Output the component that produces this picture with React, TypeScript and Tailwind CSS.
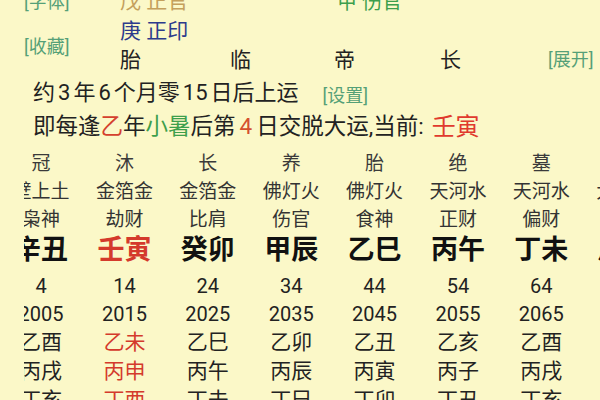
import React from 'react'

const COLS = [
  { cs: '冠', ny: '壁上土', ss: '枭神', gz: '辛丑', age: 4, year: 2005, ln: ['乙酉', '丙戌', '丁亥'] },
  { cs: '沐', ny: '金箔金', ss: '劫财', gz: '壬寅', age: 14, year: 2015, ln: ['乙未', '丙申', '丁酉'], cur: true },
  { cs: '长', ny: '金箔金', ss: '比肩', gz: '癸卯', age: 24, year: 2025, ln: ['乙巳', '丙午', '丁未'] },
  { cs: '养', ny: '佛灯火', ss: '伤官', gz: '甲辰', age: 34, year: 2035, ln: ['乙卯', '丙辰', '丁巳'] },
  { cs: '胎', ny: '佛灯火', ss: '食神', gz: '乙巳', age: 44, year: 2045, ln: ['乙丑', '丙寅', '丁卯'] },
  { cs: '绝', ny: '天河水', ss: '正财', gz: '丙午', age: 54, year: 2055, ln: ['乙亥', '丙子', '丁丑'] },
  { cs: '墓', ny: '天河水', ss: '偏财', gz: '丁未', age: 64, year: 2065, ln: ['乙酉', '丙戌', '丁亥'] },
  { cs: '死', ny: '大驿土', ss: '正官', gz: '戊申', age: 74, year: 2075, ln: ['乙未', '丙申', '丁酉'] },
]

function Link({ children }: { children: React.ReactNode }) {
  return <span className="text-[18px] text-[#55a077]">[{children}]</span>
}

function DayunCol({ c }: { c: (typeof COLS)[number] }) {
  const red = c.cur ? 'text-[#d43a2c]' : ''
  return (
    <div className="w-[83.4px] shrink-0 flex flex-col items-center whitespace-nowrap text-[#222]">
      <div className="h-[28px] leading-[28px] text-[19px] text-[#3a3a3a]">{c.cs}</div>
      <div className="h-[28px] leading-[28px] text-[19px] text-[#333]">{c.ny}</div>
      <div className="h-[28px] leading-[28px] text-[19px] text-[#333]">{c.ss}</div>
      <div className={`h-[32px] leading-[32px] text-[27px] ${c.cur ? 'font-semibold text-[#d43a2c]' : 'font-bold text-[#111]'}`}>{c.gz}</div>
      <div className="mt-[6px] h-[28px] leading-[28px] text-[20px]">{c.age}</div>
      <div className="h-[28px] leading-[28px] text-[20px]">{c.year}</div>
      {c.ln.map((s) => (
        <div key={s} className={`h-[29px] leading-[29px] text-[21px] ${red}`}>{s}</div>
      ))}
    </div>
  )
}

export default function App() {
  return (
    <div className="w-[600px] h-[400px] overflow-hidden bg-[#fbf8c8] font-['Roboto','Noto_Sans_CJK_SC',sans-serif] text-[#222]">
      {/* 四柱顶部 */}
      <div className="-mt-[13px] grid grid-cols-[120px_107px_107px_107px_107px_1fr] grid-rows-[29.5px_29.5px_29.5px] items-center whitespace-nowrap">
        <div className="pl-[24px]"><Link>字体</Link></div>
        <div className="text-[21px] text-[#c4a05c]">戊 正官</div>
        <div />
        <div className="pl-[3px] text-[20px] text-[#3d9f4c]">甲 伤官</div>
        <div />
        <div />

        <div className="row-span-2 pl-[24px] pt-[1px]"><Link>收藏</Link></div>
        <div className="text-[21px] text-[#2c3a8c]">庚 正印</div>
        <div />
        <div />
        <div />
        <div />

        <div className="text-[21px]">胎</div>
        <div className="pl-[3px] text-[21px]">临</div>
        <div className="text-[21px]">帝</div>
        <div className="-ml-[1px] text-[21px]">长</div>
        <div className="justify-self-end pr-[10px] -mt-[3px]"><Link>展开</Link></div>
      </div>

      {/* 起运 */}
      <div className="pl-[33px] h-[34px] flex items-center whitespace-nowrap text-[22px]">
        约<span className="mx-[3px]">3</span>年<span className="mx-[3px]">6</span>个月零<span className="mx-[3px]">15</span>日后上运
        <span className="ml-[24px] mt-[3px]"><Link>设置</Link></span>
      </div>
      <div className="pl-[33px] h-[34px] flex items-center whitespace-nowrap text-[22.5px]">
        即每逢<span className="text-[#d4402e]">乙</span>年<span className="text-[#3d9f4c]">小暑</span>后第
        <span className="mx-[4px] text-[#d4502e]">4</span>日交脱大运,当前:
        <span className="ml-[8px] text-[24px] text-[#e03a2e]">壬寅</span>
      </div>

      {/* 大运 */}
      <div className="mt-[6px] ml-[24px] overflow-hidden">
        <div className="-ml-[24.7px] flex">
          {COLS.map((c) => (
            <DayunCol key={c.year} c={c} />
          ))}
        </div>
      </div>
    </div>
  )
}
